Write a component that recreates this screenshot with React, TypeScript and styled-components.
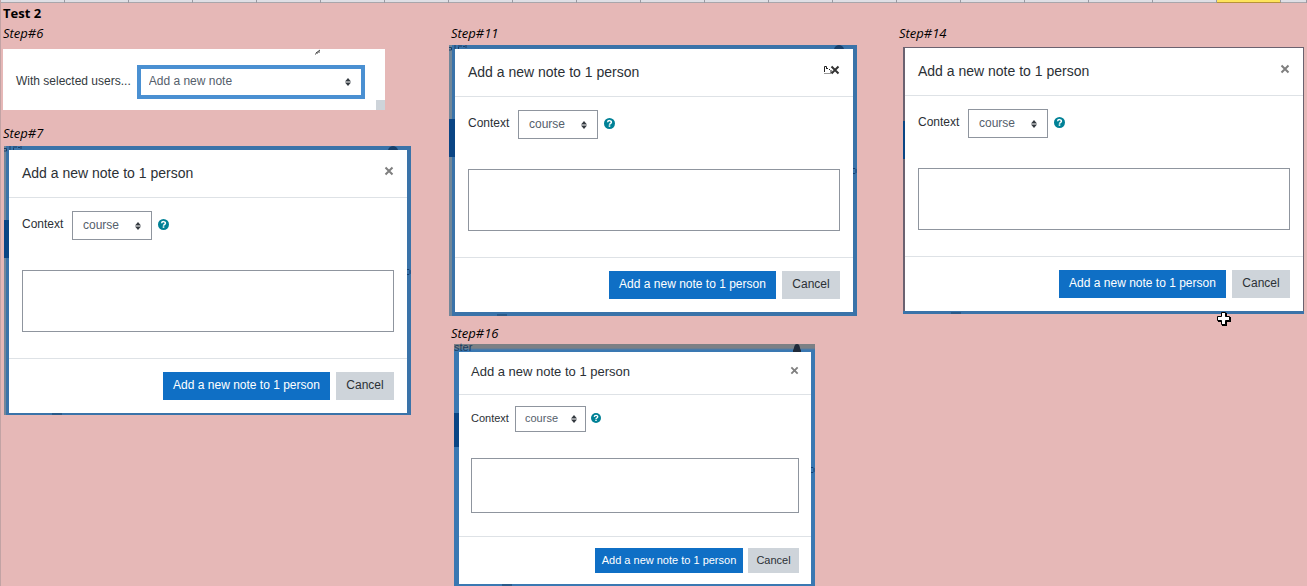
import React, { useId } from "react";
import styled, { createGlobalStyle, css } from "styled-components";

const Global = createGlobalStyle`
  * { box-sizing: border-box; }
  html, body { margin: 0; min-height: 100%; }
  body {
    background: #e6b8b7;
    color: #000;
    font-family: "Liberation Sans", Arial, sans-serif;
    overflow: hidden;
  }
`;

const Sheet = styled.main`
  border-left: 1px solid #c2a3a4;
`;

const Headings = styled.div`
  display: grid;
  grid-template-columns: repeat(20, 64fr) 26fr;
  height: 3px;
  border-bottom: 1px solid #a9a6ab;
  background: #dfdfe5;
`;

const Heading = styled.span<{ $active?: boolean }>`
  border-right: 1px solid #9a9aa2;
  ${(p) =>
    p.$active &&
    css`
      height: 3px;
      border-bottom: 1px solid #b8923a;
      background: #ffe45c;
    `}
`;

const Columns = styled.div`
  display: grid;
  grid-template-columns: 448fr 448fr 410fr;
`;

const Column = styled.section`
  display: flex;
  flex-direction: column;
  min-width: 0;
`;

const cellText = css`
  margin: 0;
  padding-left: 2px;
  height: 20px;
  font-family: "Open Sans", sans-serif;
  font-size: 13px;
  line-height: 20px;
`;

const TestName = styled.h1`
  ${cellText}
  font-weight: 700;
`;

const StepName = styled.h2`
  ${cellText}
  font-style: italic;
  font-weight: 400;
`;

const Spacer = styled.div`
  height: 20px;
`;

const BulkPanel = styled.div`
  position: relative;
  display: flex;
  align-items: center;
  gap: 6px;
  width: 382px;
  max-width: 100%;
  height: 61px;
  margin: 6px 0 13px 2px;
  padding: 4px 20px 0 13px;
  background: #fff;
  color: #343a40;
  font-size: 12px;
`;

const BulkLabel = styled.label`
  padding-bottom: 2px;
`;

const PanelCorner = styled.span`
  position: absolute;
  right: 0;
  bottom: 0;
  width: 9px;
  height: 10px;
  background: #ced4da;
`;

const PanelPointer = styled.svg`
  position: absolute;
  top: 0;
  right: 64px;
`;

const SelectWrap = styled.div<{ $grow?: boolean }>`
  position: relative;
  display: flex;
  ${(p) => p.$grow && "flex: 1;"}
`;

const SelectArrows = styled.svg<{ $inset: number }>`
  position: absolute;
  top: 50%;
  right: ${(p) => p.$inset}px;
  transform: translateY(-50%);
  pointer-events: none;
`;

const Select = styled.select<{ $small?: boolean; $focused?: boolean }>`
  appearance: none;
  width: ${(p) => (p.$focused ? "100%" : p.$small ? "71px" : "80px")};
  height: ${(p) => (p.$focused ? "34px" : p.$small ? "26px" : "29px")};
  padding: 0 ${(p) => (p.$focused ? "8px" : p.$small ? "9px" : "10px")} 2px;
  border: ${(p) => (p.$focused ? "4px solid #4a90d2" : "1px solid #8f959e")};
  border-radius: 0;
  background: #fff;
  color: #55606b;
  font: ${(p) => (p.$small ? "11px" : "12px")} "Liberation Sans", Arial, sans-serif;
`;

type FrameVariant = "first" | "second" | "third" | "small";

const frames: Record<FrameVariant, ReturnType<typeof css>> = {
  first: css`
    width: 407px;
    margin: 3px 0 0 3px;
    padding: 4px 4px 2px 5px;
    background: linear-gradient(90deg, #728799 2px, #3a73a9 2px);
  `,
  second: css`
    width: 408px;
    margin: 2px 0 7px 0;
    padding: 4px 4px 4px 6px;
    background: linear-gradient(90deg, #728799 3px, #3a73a9 3px);
  `,
  third: css`
    width: 401px;
    margin: 4px 0 0 6px;
    padding: 1px 1px 3px 2px;
    background: linear-gradient(0deg, #3a73a9 3px, #6b6270 3px);
  `,
  small: css`
    width: 361px;
    margin: 1px 0 0 5px;
    padding: 8px 4px 2px 5px;
    background: linear-gradient(180deg, #7c8085 4px, #3a78b2 6px);
  `,
};

const Frame = styled.div<{ $variant: FrameVariant }>`
  position: relative;
  max-width: 100%;
  ${(p) => frames[p.$variant]}
`;

const BackdropBlock = styled.span<{ $small?: boolean; $wide: string }>`
  position: absolute;
  left: 0;
  top: ${(p) => (p.$small ? "69px" : "74px")};
  width: ${(p) => p.$wide};
  height: ${(p) => (p.$small ? "34px" : "38px")};
  background: #0a4584;
`;

const BackdropFoot = styled.span`
  position: absolute;
  left: 48px;
  bottom: 0;
  width: 10px;
  height: 2px;
  background: #285a8a;
`;

const BackdropText = styled.span`
  position: absolute;
  left: 0;
  top: -2px;
  color: #1c3d60;
  font-size: 11px;
  line-height: 11px;
`;

const BackdropMarks = styled.svg`
  position: absolute;
  top: 0;
  left: 0;
`;

const BackdropEdge = styled.svg`
  position: absolute;
  top: 122px;
  right: 0;
`;

const BackdropBell = styled.svg`
  position: absolute;
  top: 0;
  right: 12px;
`;

const Dialog = styled.form<{ $small?: boolean }>`
  position: relative;
  background: #fff;
  color: #2b3035;
  font-size: ${(p) => (p.$small ? "11px" : "12px")};
`;

const DialogHeader = styled.header<{ $small?: boolean }>`
  display: flex;
  justify-content: space-between;
  align-items: flex-start;
  height: ${(p) => (p.$small ? "43px" : "48px")};
  padding: ${(p) => (p.$small ? "11px 12px 0 12px" : "13px 13px 0 13px")};
  border-bottom: 1px solid #dee2e6;
`;

const DialogTitle = styled.h3<{ $small?: boolean }>`
  margin: 0;
  font-size: ${(p) => (p.$small ? "13px" : "14px")};
  font-weight: 400;
  line-height: ${(p) => (p.$small ? "18px" : "20px")};
`;

const CloseButton = styled.button`
  position: relative;
  display: flex;
  margin: 0;
  padding: 3px 0;
  border: 0;
  background: none;
`;

const DialogBody = styled.div<{ $small?: boolean }>`
  padding: ${(p) => (p.$small ? "11px 12px 23px" : "13px 13px 26px")};
`;

const ContextRow = styled.div<{ $small?: boolean }>`
  display: flex;
  align-items: flex-start;
  margin-bottom: ${(p) => (p.$small ? "26px" : "30px")};
`;

const ContextLabel = styled.label<{ $small?: boolean }>`
  width: ${(p) => (p.$small ? "44px" : "50px")};
  line-height: ${(p) => (p.$small ? "24px" : "27px")};
`;

const HelpButton = styled.button<{ $small?: boolean }>`
  display: flex;
  margin: ${(p) => (p.$small ? "7px 0 0 5px" : "8px 0 0 6px")};
  padding: 0;
  border: 0;
  background: none;
`;

const NoteText = styled.textarea<{ $small?: boolean }>`
  display: block;
  width: 100%;
  height: ${(p) => (p.$small ? "55px" : "62px")};
  border: 1px solid #8f959e;
  background: #fff;
  resize: none;
`;

const DialogFooter = styled.footer<{ $small?: boolean }>`
  display: flex;
  justify-content: flex-end;
  gap: ${(p) => (p.$small ? "5px" : "6px")};
  padding: ${(p) => (p.$small ? "11px 12px" : "13px 13px")};
  border-top: 1px solid #dee2e6;
`;

const Button = styled.button<{ $small?: boolean; $primary?: boolean }>`
  width: ${(p) => (p.$primary ? (p.$small ? "148px" : "167px") : p.$small ? "51px" : "58px")};
  height: ${(p) => (p.$small ? "25px" : "28px")};
  padding: 0 0 2px;
  border: 0;
  background: ${(p) => (p.$primary ? "#0f6fc5" : "#ced4da")};
  color: ${(p) => (p.$primary ? "#fff" : "#2b3035")};
  font: ${(p) => (p.$small ? "11px" : "12px")} "Liberation Sans", Arial, sans-serif;
  white-space: nowrap;
`;

const HandPointer = styled.svg`
  position: absolute;
  top: 3px;
  right: 6px;
`;

const CellPointer = styled.svg`
  position: absolute;
  right: 72px;
  bottom: -13px;
`;

function Arrows({ inset }: { inset: number }) {
  return (
    <SelectArrows $inset={inset} width="6" height="8" viewBox="0 0 6 8" aria-hidden="true">
      <path d="M0 3.400 3 0l3 3.400zM0 4.600h6L3 8z" fill="#343a40" />
    </SelectArrows>
  );
}

interface NoteDialogProps {
  variant: FrameVariant;
  hand?: boolean;
  cross?: boolean;
}

function NoteDialog({ variant, hand, cross }: NoteDialogProps) {
  const id = useId();
  const small = variant === "small";
  const edge = { first: "5px", second: "6px", third: "2px", small: "5px" }[variant];
  const helpSize = small ? 10 : 11;
  return (
    <Frame $variant={variant}>
      {small && <BackdropText aria-hidden="true">ster</BackdropText>}
      {(variant === "first" || variant === "second") && (
        <BackdropMarks width="18" height="6" viewBox="0 0 18 6" aria-hidden="true">
          <path d="M0 2.500h2.500v2.500H0M6 0v4M9 1h4M9.500 2v2M14 1.500h2M17 0v3" fill="none" stroke="#1d3f66" />
        </BackdropMarks>
      )}
      {variant !== "third" && (
        <BackdropBell width="12" height="8" viewBox="0 0 12 8" aria-hidden="true">
          {small ? (
            <path d="M2 8V6C3.500 5 2.500 0 6 0s2.500 5 4 6v2z" fill="#1f2a3a" />
          ) : (
            <path d="M1 4C2 1 4 0 6 0s4 1 5 4z" fill="#17406c" />
          )}
        </BackdropBell>
      )}
      {variant !== "third" && (
        <BackdropEdge width="4" height="8" viewBox="0 0 4 8" aria-hidden="true">
          <path d="M0 1.500h2l1 1v3l-1 1H0" fill="none" stroke="#123f73" />
        </BackdropEdge>
      )}
      <BackdropBlock $small={small} $wide={edge} />
      <BackdropFoot />
      <Dialog $small={small} onSubmit={(e) => e.preventDefault()}>
        <DialogHeader $small={small}>
          <DialogTitle $small={small}>Add a new note to 1 person</DialogTitle>
          <CloseButton type="button" aria-label="Close">
            {hand && (
              <HandPointer width="12" height="11" viewBox="0 0 12 11" aria-hidden="true">
                <path d="M2.500 7V1.500h2V4M5 3.500h1M7 4.500h1M9 5v3" fill="none" stroke="#222" />
                <path d="M2 8.500h7" stroke="#999" />
              </HandPointer>
            )}
            <svg width={small ? 9 : 10} height={small ? 9 : 10} viewBox="0 0 10 10" aria-hidden="true">
              <path d="M1.500 1.500l7 7m0-7l-7 7" stroke={hand ? "#333" : "#7f7f7f"} strokeWidth="2" />
            </svg>
          </CloseButton>
        </DialogHeader>
        <DialogBody $small={small}>
          <ContextRow $small={small}>
            <ContextLabel $small={small} htmlFor={id}>Context</ContextLabel>
            <SelectWrap>
              <Select id={id} $small={small} defaultValue="course">
                <option>course</option>
              </Select>
              <Arrows inset={small ? 9 : 11} />
            </SelectWrap>
            <HelpButton $small={small} type="button" aria-label="Help with Context">
              <svg width={helpSize} height={helpSize} viewBox="0 0 11 11" aria-hidden="true">
                <circle cx="5.500" cy="5.500" r="5.500" fill="#008196" />
                <path d="M3.600 4.200c.2-2.200 3.900-2 3.800 0 0 1.300-1.900 1.300-1.900 2.500" fill="none" stroke="#fff" strokeWidth="1.500" />
                <rect x="4.700" y="7.300" width="1.600" height="1.500" fill="#fff" />
              </svg>
            </HelpButton>
          </ContextRow>
          <NoteText $small={small} aria-label="Note" />
        </DialogBody>
        <DialogFooter $small={small}>
          <Button $small={small} $primary type="submit">Add a new note to 1 person</Button>
          <Button $small={small} type="button">Cancel</Button>
        </DialogFooter>
      </Dialog>
      {cross && (
        <CellPointer width="16" height="16" viewBox="0 0 16 16" aria-hidden="true">
          <path d="M6 2h5v4h4v5h-4v4H6v-4H2V6h4z" fill="#000" />
          <path d="M5.500 1.500h4v4h4v4h-4v4h-4v-4h-4v-4h4z" fill="#fff" stroke="#000" />
        </CellPointer>
      )}
    </Frame>
  );
}

export default function App() {
  return (
    <Sheet>
      <Global />
      <Headings>
        {Array.from({ length: 21 }, (_, i) => (
          <Heading key={i} $active={i === 19} />
        ))}
      </Headings>
      <Columns>
        <Column>
          <TestName>Test 2</TestName>
          <StepName>Step#6</StepName>
          <BulkPanel>
            <BulkLabel htmlFor="bulk">With selected users...</BulkLabel>
            <SelectWrap $grow>
              <Select id="bulk" $focused defaultValue="Add a new note">
                <option>Add a new note</option>
              </Select>
              <Arrows inset={14} />
            </SelectWrap>
            <PanelCorner />
            <PanelPointer width="6" height="6" viewBox="0 0 6 6" aria-hidden="true">
              <path d="M1 4l4-3M2 3v2M4 2v2M0 5h1" stroke="#444" fill="none" />
            </PanelPointer>
          </BulkPanel>
          <StepName>Step#7</StepName>
          <NoteDialog variant="first" />
        </Column>
        <Column>
          <Spacer />
          <StepName>Step#11</StepName>
          <NoteDialog variant="second" hand />
          <StepName>Step#16</StepName>
          <NoteDialog variant="small" />
        </Column>
        <Column>
          <Spacer />
          <StepName>Step#14</StepName>
          <NoteDialog variant="third" cross />
        </Column>
      </Columns>
    </Sheet>
  );
}
